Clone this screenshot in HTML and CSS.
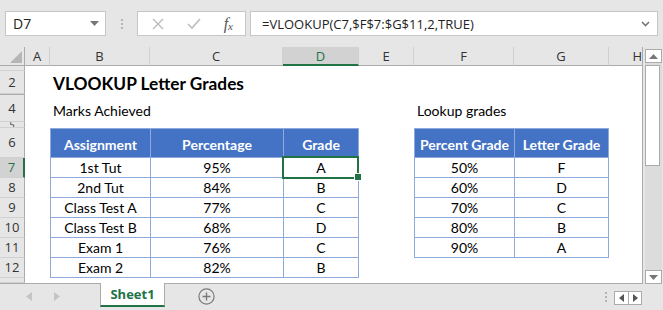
FILE: index.html
```html
<!DOCTYPE html>
<html lang="en">
<head>
    <meta charset="UTF-8">
    <meta name="viewport" content="width=device-width, initial-scale=1.0">
    <title>VLOOKUP Letter Grades</title>
    <link rel="stylesheet" href="styles.css">
</head>
<body>
    <div class="topbar">
        <div class="namebox">
            <span>D7</span>
            <svg width="9" height="5" viewBox="0 0 9 5"><path d="M0 0h9L4.5 5z" fill="#777"/></svg>
        </div>
        <div class="grip"><i></i><i></i><i></i></div>
        <div class="fxbox">
            <svg width="12" height="12" viewBox="0 0 12 12"><path d="M1 1l10 10M11 1L1 11" stroke="#bcbcbc" stroke-width="1.4" fill="none"/></svg>
            <svg width="14" height="12" viewBox="0 0 14 12"><path d="M1 6l4 4 8-9" stroke="#bcbcbc" stroke-width="1.6" fill="none"/></svg>
            <span class="fx">f<sub>x</sub></span>
        </div>
        <div class="formula">
            <span>=VLOOKUP(C7,$F$7:$G$11,2,TRUE)</span>
            <svg width="9" height="6" viewBox="0 0 9 6"><path d="M1 1l3.5 3.5L8 1" stroke="#777" stroke-width="1.6" fill="none"/></svg>
        </div>
    </div>

    <div class="main">
        <div class="sheet">
            <!-- column headers -->
            <div class="corner"><svg width="12" height="12" viewBox="0 0 12 12"><path d="M12 0v12H0z" fill="#b6b6b6"/></svg></div>
            <div class="colhead">A</div>
            <div class="colhead">B</div>
            <div class="colhead">C</div>
            <div class="colhead active">D</div>
            <div class="colhead">E</div>
            <div class="colhead">F</div>
            <div class="colhead">G</div>
            <div class="colhead last">H</div>

            <!-- row headers -->
            <div class="rowhead r1"></div>
            <div class="rowhead r2">2</div>
            <div class="rowhead r3"></div>
            <div class="rowhead r4">4</div>
            <div class="rowhead r5">5</div>
            <div class="rowhead r6">6</div>
            <div class="rowhead r7 active">7</div>
            <div class="rowhead r8">8</div>
            <div class="rowhead r9">9</div>
            <div class="rowhead r10">10</div>
            <div class="rowhead r11">11</div>
            <div class="rowhead r12">12</div>
            <div class="rowhead r13"></div>

            <div class="title">VLOOKUP Letter Grades</div>
            <div class="label marks">Marks Achieved</div>
            <div class="label lookup">Lookup grades</div>

            <table class="grades marks-table">
                <tr>
                    <th class="w-assign">Assignment</th>
                    <th class="w-pct">Percentage</th>
                    <th class="w-grade">Grade</th>
                </tr>
                <tr><td>1st Tut</td><td>95%</td><td class="selected">A</td></tr>
                <tr><td>2nd Tut</td><td>84%</td><td>B</td></tr>
                <tr><td>Class Test A</td><td>77%</td><td>C</td></tr>
                <tr><td>Class Test B</td><td>68%</td><td>D</td></tr>
                <tr><td>Exam 1</td><td>76%</td><td>C</td></tr>
                <tr><td>Exam 2</td><td>82%</td><td>B</td></tr>
            </table>

            <table class="grades lookup-table">
                <tr>
                    <th class="w-percent">Percent Grade</th>
                    <th class="w-letter">Letter Grade</th>
                </tr>
                <tr><td>50%</td><td>F</td></tr>
                <tr><td>60%</td><td>D</td></tr>
                <tr><td>70%</td><td>C</td></tr>
                <tr><td>80%</td><td>B</td></tr>
                <tr><td>90%</td><td>A</td></tr>
            </table>
        </div>

        <div class="vscroll">
            <div class="sbtn"><svg width="9" height="5" viewBox="0 0 9 5"><path d="M0 5h9L4.5 0z" fill="#777"/></svg></div>
            <div class="track"><div class="thumb"></div></div>
            <div class="sbtn"><svg width="9" height="5" viewBox="0 0 9 5"><path d="M0 0h9L4.5 5z" fill="#777"/></svg></div>
        </div>
    </div>

    <div class="tabbar">
        <div class="tabnav">
            <svg width="6" height="9" viewBox="0 0 6 9"><path d="M6 0v9L0 4.5z" fill="#c4c4c4"/></svg>
            <svg width="6" height="9" viewBox="0 0 6 9"><path d="M0 0v9l6-4.5z" fill="#c4c4c4"/></svg>
        </div>
        <div class="tab">Sheet1</div>
        <div class="addsheet">
            <svg width="17" height="17" viewBox="0 0 17 17"><circle cx="8.5" cy="8.5" r="7.6" stroke="#7a7a7a" stroke-width="1.2" fill="none"/><path d="M8.5 4.5v8M4.5 8.5h8" stroke="#7a7a7a" stroke-width="1.4"/></svg>
        </div>
        <div class="spacer"></div>
        <div class="grip"><i></i><i></i><i></i></div>
        <div class="hbtns">
            <div class="hbtn"><svg width="5" height="8" viewBox="0 0 5 8"><path d="M5 0v8L0 4z" fill="#555"/></svg></div>
            <div class="hbtn"><svg width="5" height="8" viewBox="0 0 5 8"><path d="M0 0v8l5-4z" fill="#555"/></svg></div>
        </div>
    </div>
</body>
</html>
```

FILE: styles.css
```css
* {
    box-sizing: border-box;
}
body {
    margin: 0;
    width: 663px;
    height: 310px;
    overflow: hidden;
    background-color: #e6e6e6;
    font-family: 'Lato', 'Open Sans', sans-serif;
    color: #000;
}

/* Formula bar */
.topbar {
    height: 47px;
    display: flex;
    align-items: flex-start;
    padding: 11px 5px 0 5px;
}
.namebox, .fxbox, .formula {
    height: 25px;
    background-color: #fff;
    border: 1px solid #c6c6c6;
    display: flex;
    align-items: center;
}
.namebox {
    width: 101px;
    padding: 0 6px 0 7px;
    justify-content: space-between;
    font-family: 'Open Sans', sans-serif;
    font-size: 14px;
    color: #222;
}
.grip {
    width: 31px;
    height: 25px;
    display: flex;
    flex-direction: column;
    align-items: center;
    justify-content: center;
    gap: 2px;
}
.grip i {
    width: 2px;
    height: 2px;
    background-color: #b4b4b4;
}
.fxbox {
    width: 109px;
    padding: 0 12px 0 14px;
    justify-content: space-between;
}
.fx {
    font-family: 'Liberation Serif', serif;
    font-style: italic;
    font-size: 16px;
    color: #555;
    line-height: 1;
}
.fx sub {
    font-size: 11px;
    vertical-align: -1px;
}
.formula {
    flex: 1;
    margin-left: 4px;
    padding: 0 7px 0 11px;
    justify-content: space-between;
    font-family: 'Open Sans', sans-serif;
    font-size: 13px;
    color: #222;
}

/* Sheet */
.main {
    display: flex;
    height: 237px;
}
.sheet {
    width: 643px;
    background-color: #fff;
    border-right: 1px solid #ababab;
    border-bottom: 1px solid #ababab;
    display: grid;
    grid-template-columns: 25px 25px 100px 133px 76px 55px 100px 95px 1fr;
    grid-template-rows: 19px 5px 23px 1px 27px 6px 30px repeat(6, 20px) 1fr;
}
.corner {
    background-color: #e6e6e6;
    border-right: 1px solid #ababab;
    border-bottom: 1px solid #ababab;
    display: flex;
    align-items: flex-end;
    justify-content: flex-end;
    padding: 0 2px 2px 0;
}
.colhead {
    background-color: #e6e6e6;
    border-right: 1px solid #d0d0d0;
    border-bottom: 1px solid #ababab;
    font-family: 'Open Sans', sans-serif;
    font-size: 13px;
    color: #333;
    display: flex;
    align-items: center;
    justify-content: center;
}
.colhead.active {
    background-color: #d2d2d2;
    color: #217346;
    border-bottom: 2px solid #217346;
}
.colhead.last {
    border-right: none;
    justify-content: flex-end;
    overflow: hidden;
    padding-right: 0;
}
.rowhead {
    grid-column: 1;
    background-color: #e6e6e6;
    border-right: 1px solid #ababab;
    border-bottom: 1px solid #d0d0d0;
    font-family: 'Open Sans', sans-serif;
    font-size: 13px;
    color: #333;
    display: flex;
    align-items: center;
    justify-content: center;
    overflow: hidden;
    line-height: 1;
}
.rowhead.active {
    background-color: #d2d2d2;
    color: #217346;
    border-right: 2px solid #217346;
}
.r3 {
    border-bottom-color: #ababab;
}
.r5 {
    font-size: 9px;
}

.title {
    grid-column: 3 / 7;
    grid-row: 3;
    align-self: end;
    padding-left: 3px;
    font-weight: 700;
    font-size: 17.3px;
    line-height: 20px;
}
.label {
    grid-row: 5;
    align-self: end;
    padding: 0 0 2px 3px;
    font-size: 14px;
    line-height: 18px;
}
.label.marks {
    grid-column: 3 / 5;
}
.label.lookup {
    grid-column: 7 / 9;
}

/* Tables */
.grades {
    border-collapse: separate;
    border-spacing: 0;
    table-layout: fixed;
    width: 100%;
    align-self: start;
    font-size: 14px;
}
.marks-table {
    grid-column: 3 / 6;
    grid-row: 7 / 14;
}
.lookup-table {
    grid-column: 7 / 9;
    grid-row: 7 / 13;
}
.grades th, .grades td {
    border-left: 1px solid #8eaadb;
    border-bottom: 1px solid #8eaadb;
    text-align: center;
    padding: 0;
}
.grades th:last-child, .grades td:last-child {
    border-right: 1px solid #8eaadb;
}
.grades th {
    height: 30px;
    border-top: 1px solid #8eaadb;
    background-color: #4472c4;
    color: #fff;
    font-weight: 700;
    padding-top: 2px;
}
.grades td {
    height: 20px;
    line-height: 18px;
}
.w-assign { width: 100px; }
.w-pct { width: 133px; }
.w-grade { width: 76px; }
.w-percent { width: 100px; }
.w-letter { width: 95px; }

.grades td.selected {
    position: relative;
}
.grades td.selected::after {
    content: '';
    position: absolute;
    left: -2px;
    top: -2px;
    right: -1px;
    bottom: -2px;
    border: 2px solid #217346;
}
.grades td.selected::before {
    content: '';
    position: absolute;
    right: -4px;
    bottom: -4px;
    width: 6px;
    height: 6px;
    background-color: #217346;
    border: 1px solid #fff;
    z-index: 1;
}

/* Vertical scrollbar */
.vscroll {
    width: 20px;
    display: flex;
    flex-direction: column;
    padding: 2px 1px 0 2px;
}
.sbtn {
    height: 14px;
    background-color: #fff;
    border: 1px solid #ababab;
    display: flex;
    align-items: center;
    justify-content: center;
}
.track {
    flex: 1;
    background-color: #dcdcdc;
    padding: 2px 2px 0 0;
}
.thumb {
    height: 101px;
    background-color: #fff;
    border: 1px solid #ababab;
}

/* Sheet tabs */
.tabbar {
    height: 26px;
    display: flex;
    align-items: flex-start;
}
.tabnav {
    width: 100px;
    height: 25px;
    display: flex;
    align-items: center;
    gap: 22px;
    padding-left: 26px;
}
.tab {
    width: 65px;
    height: 24px;
    margin-top: -1px;
    background-color: #fff;
    border-left: 1px solid #ababab;
    border-right: 1px solid #ababab;
    border-bottom: 2px solid #217346;
    color: #217346;
    font-family: 'Open Sans', sans-serif;
    font-weight: 700;
    font-size: 13px;
    display: flex;
    align-items: center;
    justify-content: center;
}
.addsheet {
    height: 25px;
    display: flex;
    align-items: center;
    padding-left: 33px;
}
.spacer {
    flex: 1;
}
.tabbar .grip {
    width: 16px;
    height: 24px;
    padding-top: 2px;
}
.hbtns {
    display: flex;
    margin: 7px 21px 0 0;
    border: 1px solid #ababab;
}
.hbtn {
    width: 13px;
    height: 12px;
    background-color: #fff;
    display: flex;
    align-items: center;
    justify-content: center;
}
.hbtn + .hbtn {
    border-left: 1px solid #ababab;
}
```
